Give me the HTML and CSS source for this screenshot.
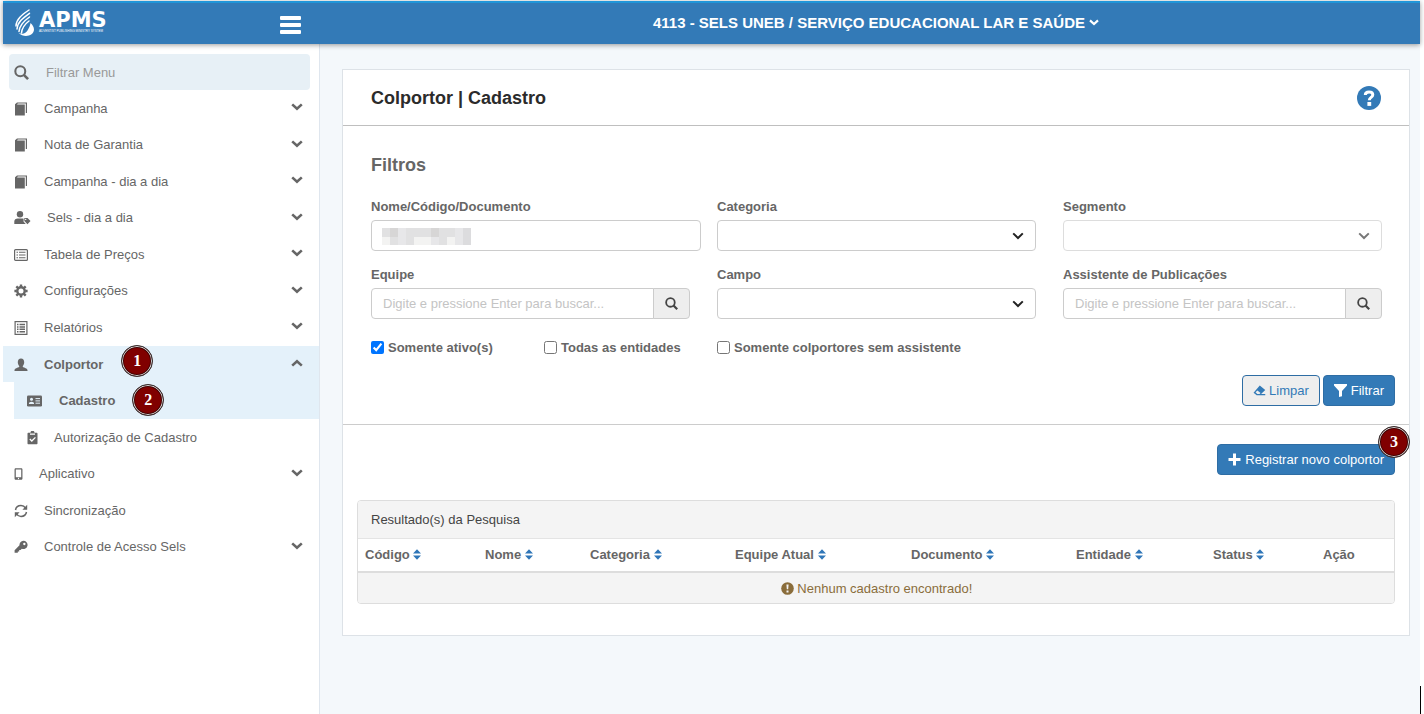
FILE: index.html
```html
<!DOCTYPE html>
<html lang="pt-BR">
<head>
<meta charset="utf-8">
<title>Colportor | Cadastro</title>
<link rel="stylesheet" href="styles.css">
</head>
<body>
<svg class="sprite" aria-hidden="true">
  <symbol id="chevron" viewBox="0 0 12 8"><path d="M1.2 1.4 6 5.8l4.8-4.4" fill="none" stroke="currentColor" stroke-width="2.6"/></symbol>
  <symbol id="caret" viewBox="0 0 12 8"><path d="M1.2 1.4 6 6l4.8-4.6" fill="none" stroke="currentColor" stroke-width="2"/></symbol>
  <symbol id="search" viewBox="0 0 16 16"><circle cx="6.7" cy="6.700" r="5.300" fill="none" stroke="currentColor" stroke-width="2.200"/><path d="m10.500 10.500 4.500 4.500" stroke="currentColor" stroke-width="2.800"/></symbol>
  <symbol id="book" viewBox="0 0 14 14"><path d="M1 2.200 3 .5h10V11h-1.200V1.600H3.800L3 2.500h7.800V13.500H1z" fill="currentColor"/></symbol>
  <symbol id="user-tag" viewBox="0 0 17 14"><circle cx="6" cy="3.3" r="3.2" fill="currentColor"/><path d="M.3 13v-2.400c0-2 1.500-3.200 3.400-3.200h4.500c.6 0 1 .1 1.400.3v3l2.200 2.300z" fill="currentColor"/><path d="M10.300 7h3.200l3 3-3 3.200-3.200-3.200z" fill="currentColor"/><circle cx="11.700" cy="8.400" r=".7" fill="#fff"/></symbol>
  <symbol id="list" viewBox="0 0 14 12"><rect x=".6" y=".6" width="12.800" height="10.800" rx="1" fill="none" stroke="currentColor" stroke-width="1.200"/><path d="M2.500 3.300h1.500M2.500 6H4M2.500 8.700H4M5 3.300h6.500M5 6h6.500M5 8.700h6.500" stroke="currentColor" stroke-width="1.100"/></symbol>
  <symbol id="gear" viewBox="0 0 14 14"><circle cx="7" cy="7" r="3.700" fill="none" stroke="currentColor" stroke-width="2.400"/><path d="M7 .4v2.400M7 11.200v2.400M.4 7h2.400M11.200 7h2.400M2.300 2.300 4 4M10 10l1.700 1.700M2.300 11.700 4 10M10 4l1.700-1.700" stroke="currentColor" stroke-width="2.400"/></symbol>
  <symbol id="report" viewBox="0 0 14 14"><rect x="1.100" y=".6" width="11.800" height="12.800" fill="none" stroke="currentColor" stroke-width="1.200"/><path d="M3 3.500h1.500M3 5.900h1.500M3 8.300h1.500M3 10.700h1.500M5.500 3.500H11M5.500 5.900H11M5.500 8.300H11M5.500 10.700H11" stroke="currentColor" stroke-width="1.500"/></symbol>
  <symbol id="user" viewBox="0 0 14 14"><path d="M7 .5c2.100 0 3.200 1.500 3.200 3.700 0 1.500-.6 2.900-1.400 3.700v1.200c1.300.8 4.700 1.300 4.700 3.200V13H.5v-.7c0-1.900 3.400-2.400 4.700-3.200V7.900C4.400 7.100 3.800 5.700 3.800 4.200 3.800 2 4.900.5 7 .5z" fill="currentColor"/></symbol>
  <symbol id="id-card" viewBox="0 0 15 12"><rect y=".5" width="15" height="11" rx="1.300" fill="currentColor"/><circle cx="4.500" cy="4.300" r="1.500" fill="#e4f1fa"/><path d="M1.900 9c0-1.600 1-2.300 2.600-2.300s2.600.7 2.600 2.300z" fill="#e4f1fa"/><path d="M8.500 3.600H13M8.500 5.900H13M8.500 8.200H13" stroke="#e4f1fa"/></symbol>
  <symbol id="clipboard" viewBox="0 0 11 14"><path d="M1.500 1.700h2a2 2 0 0 1 4 0h2c.6 0 1 .4 1 1v9.600c0 .6-.4 1-1 1h-8c-.6 0-1-.4-1-1V2.700c0-.6.400-1 1-1z" fill="currentColor"/><path d="M3 3.200h5M2.800 8l2 2 3.600-3.600" fill="none" stroke="#fff" stroke-width="1.300"/></symbol>
  <symbol id="phone" viewBox="0 0 10 14"><path d="M2 .5h6c.8 0 1.400.6 1.400 1.400v10.200c0 .8-.6 1.400-1.400 1.400H2c-.8 0-1.400-.6-1.400-1.400V1.900C.6 1.100 1.200.5 2 .5zM2 2v8.500h6V2z" fill="currentColor" fill-rule="evenodd"/><circle cx="5" cy="12" r=".7" fill="#fff"/></symbol>
  <symbol id="sync" viewBox="0 0 14 14"><path d="M1.500 6C2 3.300 4.300 1.600 7 1.600c2 0 3.500.9 4.600 2.500M12.500 8c-.5 2.700-2.800 4.400-5.500 4.400-2 0-3.500-.9-4.600-2.500" fill="none" stroke="currentColor" stroke-width="1.500"/><path d="M13.200.8v5H8.400zM.8 13.200v-5h4.800z" fill="currentColor"/></symbol>
  <symbol id="key" viewBox="0 0 14 14"><path d="M9.300.7a4.200 4.200 0 1 1-1.500 8.100L6.600 10H5.200v1.400H3.800v1.400H.6v-2.600l4.900-4.900A4.200 4.200 0 0 1 9.300.7zm1 2.100a1.200 1.200 0 1 0 .1 2.400 1.200 1.200 0 0 0-.1-2.400z" fill="currentColor" fill-rule="evenodd"/></symbol>
  <symbol id="eraser" viewBox="0 0 14 12"><path d="M7.300.6 13.200 5.500 8.700 9.800h4.500v1.400H4L.6 8.300z" fill="currentColor"/><path d="M2.700 8 4.800 6l3.300 2.800-1 1H4.600z" fill="#eee"/></symbol>
  <symbol id="funnel" viewBox="0 0 13 13"><path d="M0 0h13v1.500L8 7v5.200L5 13V7L0 1.500z" fill="currentColor"/></symbol>
  <symbol id="plus" viewBox="0 0 13 13"><path d="M6.500.5v12M.5 6.500h12" stroke="currentColor" stroke-width="3"/></symbol>
  <symbol id="sort" viewBox="0 0 8 11"><path d="M4 .2 8 4.600H0zM4 10.800 0 6.400h8z" fill="currentColor"/></symbol>
  <symbol id="alert" viewBox="0 0 13 13"><circle cx="6.500" cy="6.500" r="6.300" fill="currentColor"/><path d="M5.400 2.500h2.200l-.4 4.800H5.800zM5.500 8.500h2v1.900h-2z" fill="#f4f4f4"/></symbol>
  <symbol id="help" viewBox="0 0 24 24"><circle cx="12" cy="12" r="12" fill="currentColor"/><path d="M8.300 9C8.300 6.700 9.900 6 12 6s3.800.9 3.800 2.800c0 2.700-3.500 2.500-3.500 5.400" fill="none" stroke="#fff" stroke-width="3"/><path d="M10.400 16h3.800v3.900h-3.800z" fill="#fff"/></symbol>
</svg>
<div class="app">
  <header class="topbar">
    <div class="brand">
      <a class="logo" href="#">
        <svg class="flame" viewBox="0 0 20 28" aria-hidden="true">
          <g fill="none" stroke="#fff" stroke-linecap="round" stroke-width="1.500"><path d="M14 1C6.500 6 1 10.500 1 17"/><path d="M14.500 4.300C8 9 2.500 13 2 20"/><path d="M14.500 8C9.500 11.500 4.500 16 4 22.500"/><path d="M14 12c-4 3-7 6.500-7.500 12"/></g>
          <path d="M15.500 14c4.200 3.500 4.700 8.500 1 11.200-3.700 2.600-9 2.300-13-1.200 4.500 1.500 7.300.5 9-2.500 1.300-2.300 2.700-4.500 3-7.500z" fill="#fff"/>
        </svg>
        <span class="wordmark"><span class="name">APMS</span><span class="tagline">ADVENTIST PUBLISHING MINISTRY SYSTEM</span></span>
      </a>
      <button class="burger" type="button" aria-label="Menu"><span></span><span></span><span></span></button>
    </div>
    <button class="entity" type="button">4113 - SELS UNEB / SERVIÇO EDUCACIONAL LAR E SAÚDE <svg class="entity-caret"><use href="#chevron"/></svg></button>
  </header>
  <div class="body">
    <nav class="sidebar">
      <label class="menu-search"><svg class="ico"><use href="#search"/></svg><input type="text" placeholder="Filtrar Menu" aria-label="Filtrar Menu"></label>
      <ul class="menu">
        <li><a href="#"><svg class="ico"><use href="#book"/></svg>Campanha<svg class="arrow"><use href="#chevron"/></svg></a></li>
        <li><a href="#"><svg class="ico"><use href="#book"/></svg>Nota de Garantia<svg class="arrow"><use href="#chevron"/></svg></a></li>
        <li><a href="#"><svg class="ico"><use href="#book"/></svg>Campanha - dia a dia<svg class="arrow"><use href="#chevron"/></svg></a></li>
        <li><a href="#"><svg class="ico ico-wide"><use href="#user-tag"/></svg>Sels - dia a dia<svg class="arrow"><use href="#chevron"/></svg></a></li>
        <li><a href="#"><svg class="ico"><use href="#list"/></svg>Tabela de Preços<svg class="arrow"><use href="#chevron"/></svg></a></li>
        <li><a href="#"><svg class="ico"><use href="#gear"/></svg>Configurações<svg class="arrow"><use href="#chevron"/></svg></a></li>
        <li><a href="#"><svg class="ico"><use href="#report"/></svg>Relatórios<svg class="arrow"><use href="#chevron"/></svg></a></li>
        <li class="open">
          <a class="active" href="#"><svg class="ico"><use href="#user"/></svg><span class="marked">Colportor<span class="step">1</span></span><svg class="arrow up"><use href="#chevron"/></svg></a>
          <a class="sub active" href="#"><svg class="ico ico-card"><use href="#id-card"/></svg><span class="marked">Cadastro<span class="step">2</span></span></a>
          <a class="sub" href="#"><svg class="ico ico-slim"><use href="#clipboard"/></svg>Autorização de Cadastro</a>
        </li>
        <li><a href="#"><svg class="ico ico-phone"><use href="#phone"/></svg>Aplicativo<svg class="arrow"><use href="#chevron"/></svg></a></li>
        <li><a href="#"><svg class="ico"><use href="#sync"/></svg>Sincronização</a></li>
        <li><a href="#"><svg class="ico"><use href="#key"/></svg>Controle de Acesso Sels<svg class="arrow"><use href="#chevron"/></svg></a></li>
      </ul>
    </nav>
    <main class="content">
      <section class="panel">
        <div class="panel-head"><h1>Colportor | Cadastro</h1><button class="help" type="button" aria-label="Ajuda"><svg><use href="#help"/></svg></button></div>
        <form class="filters">
          <h2>Filtros</h2>
          <div class="grid">
            <div class="field field-wide"><label for="nome">Nome/Código/Documento</label>
              <div class="masked"><input id="nome" class="control" type="text">
                <svg class="mosaic" viewBox="0 0 11 2" preserveAspectRatio="none" shape-rendering="crispEdges" aria-hidden="true">
                  <path fill="#e1e1e2" d="M0 0h11v2H0z"/><path fill="#d7d6d6" d="M1 0h1v1H1zM6 0h1v1H6z"/><path fill="#e7e7e9" d="M2 0h1v2H2zM9 0h1v2H9zM6 1h1v1H6z"/><path fill="#f3f3f2" d="M0 1h1v1H0zM4 1h2v1H4zM8 1h1v1H8z"/><path fill="#dcdcde" d="M10 0h1v2h-1z"/>
                </svg></div></div>
            <div class="field"><label for="categoria">Categoria</label><div class="picker"><select id="categoria" class="control"><option></option></select><svg><use href="#caret"/></svg></div></div>
            <div class="field"><label for="segmento">Segmento</label><div class="picker off"><select id="segmento" class="control" disabled><option></option></select><svg><use href="#caret"/></svg></div></div>
            <div class="field"><label for="equipe">Equipe</label><div class="group"><input id="equipe" class="control" type="text" placeholder="Digite e pressione Enter para buscar..."><button type="button" aria-label="Buscar equipe"><svg><use href="#search"/></svg></button></div></div>
            <div class="field"><label for="campo">Campo</label><div class="picker"><select id="campo" class="control"><option></option></select><svg><use href="#caret"/></svg></div></div>
            <div class="field"><label for="assistente">Assistente de Publicações</label><div class="group"><input id="assistente" class="control" type="text" placeholder="Digite e pressione Enter para buscar..."><button type="button" aria-label="Buscar assistente"><svg><use href="#search"/></svg></button></div></div>
            <label class="check"><input type="checkbox" checked>Somente ativo(s)</label>
            <label class="check"><input type="checkbox">Todas as entidades</label>
            <label class="check check-long"><input type="checkbox">Somente colportores sem assistente</label>
          </div>
          <div class="actions">
            <button class="btn btn-light" type="button"><svg><use href="#eraser"/></svg>Limpar</button>
            <button class="btn" type="button"><svg><use href="#funnel"/></svg>Filtrar</button>
          </div>
        </form>
        <div class="results">
          <div class="register"><button class="btn" type="button"><svg><use href="#plus"/></svg>Registrar novo colportor</button><span class="step step-corner">3</span></div>
          <div class="card">
            <div class="card-head">Resultado(s) da Pesquisa</div>
            <table>
              <colgroup><col class="c-codigo"><col class="c-nome"><col class="c-categoria"><col class="c-equipe"><col class="c-documento"><col class="c-entidade"><col class="c-status"><col class="c-acao"></colgroup>
              <thead><tr>
                <th>Código <svg><use href="#sort"/></svg></th><th>Nome <svg><use href="#sort"/></svg></th><th>Categoria <svg><use href="#sort"/></svg></th><th>Equipe Atual <svg><use href="#sort"/></svg></th><th>Documento <svg><use href="#sort"/></svg></th><th>Entidade <svg><use href="#sort"/></svg></th><th>Status <svg><use href="#sort"/></svg></th><th>Ação</th>
              </tr></thead>
              <tbody><tr><td colspan="8"><svg><use href="#alert"/></svg> Nenhum cadastro encontrado!</td></tr></tbody>
            </table>
          </div>
        </div>
      </section>
    </main>
  </div>
</div>
<span class="edge-mark"></span>
</body>
</html>
```
FILE: styles.css
```css
* { box-sizing: border-box; }
body {
  margin: 0;
  padding: 1px 4px 0 3px;
  background: #fff;
  color: #666;
  font: 13px/20px "Liberation Sans", Arial, sans-serif;
}
input, select, button { font: inherit; color: inherit; }
button { margin: 0; padding: 0; border: 0; background: none; }
a { color: inherit; text-decoration: none; }
svg { display: block; flex: none; }
.sprite { position: absolute; width: 0; height: 0; }
.app { display: flex; flex-direction: column; min-height: calc(100vh - 1px); }

.topbar {
  display: flex;
  position: relative;
  z-index: 1;
  height: 43px;
  padding-bottom: 2px;
  border-top: 2px solid #2196d9;
  background: #337ab7;
  color: #fff;
  box-shadow: 0 1px 5px rgba(0, 0, 0, .4);
}
.brand { display: flex; flex: none; align-items: center; justify-content: space-between; width: 317px; padding: 0 19px 0 12px; }
.logo { display: flex; gap: 4px; align-items: center; }
.flame { width: 20px; height: 28px; }
.wordmark { display: flex; flex-direction: column; }
.name { font: bold 21px/16px "DejaVu Sans", sans-serif; }
.tagline { font-size: 3px; line-height: 6px; white-space: nowrap; }
.burger { display: flex; flex-direction: column; gap: 3px; padding-top: 5px; }
.burger span { width: 21px; height: 4px; border-radius: 1px; background: #fff; }
.entity { display: flex; flex: 1; gap: 4px; align-items: center; justify-content: center; padding-left: 12px; font-size: 15px; font-weight: bold; }
.entity-caret { width: 10px; height: 7px; }

.body { display: flex; flex: 1; }
.sidebar { flex: none; width: 317px; padding-top: 10px; border-right: 1px solid #dfe6ee; }
.menu-search { display: flex; align-items: center; height: 36px; margin: 0 9px 0 6px; padding-left: 5px; border-radius: 4px; background: #e7f0f6; }
.menu-search .ico { width: 15px; height: 15px; margin-right: 17px; }
.menu-search input { flex: 1; min-width: 0; padding: 1px 0 0; border: 0; background: none; outline: 0; }
.menu-search input::placeholder { color: #999; }
.menu { display: grid; grid-auto-rows: 1fr; min-height: 475px; margin: 0; padding: 0; list-style: none; }
.menu li { display: grid; }
.menu .open { grid-row: span 3; grid-template-rows: repeat(3, 1fr); }
.menu a { display: flex; align-items: center; padding: 1px 16px 0 11px; }
.menu .sub { margin-left: 11px; padding-left: 13px; }
.menu .active { background: #e4f1fa; font-weight: bold; }
.ico { width: 14px; height: 14px; margin-right: 16px; }
.ico-wide { width: 17px; }
.ico-card { width: 15px; margin-right: 17px; }
.ico-slim { width: 11px; }
.ico-phone { width: 9px; }
.arrow { width: 12px; height: 8px; margin: 0 0 3px auto; }
.arrow.up { transform: rotate(180deg); }
.marked { position: relative; }
.step {
  position: absolute;
  top: 50%;
  left: calc(100% + 18px);
  width: 32px;
  height: 32px;
  margin-top: -20px;
  border: 1px solid #333;
  border-radius: 50%;
  background: #800000;
  box-shadow: inset 0 0 0 1px #ddd, inset 0 0 0 2px #400;
  color: #fff;
  font: bold 16px/30px "Liberation Serif", serif;
  text-align: center;
}
.sub .step { left: calc(100% + 17px); margin-top: -17px; }

.content { flex: 1; min-width: 0; padding: 25px 10px 20px 22px; background: #f4f8fb; }
.panel { border: 1px solid #dde2e7; background: #fff; }
.panel-head { display: flex; align-items: center; justify-content: space-between; height: 56px; padding: 0 28px; border-bottom: 1px solid #bfbfbf; }
h1, h2 { margin: 0; font-size: 18px; line-height: 24px; }
h1 { color: #2b2b2b; }
.help { color: #337ab7; }
.help svg { width: 24px; height: 24px; }
.filters { padding: 27px 0 18px 28px; border-bottom: 1px solid #ccc; }
.grid { display: grid; grid-template-columns: repeat(6, 1fr); row-gap: 14px; margin-top: 20px; }
.field { grid-column: span 2; padding-right: 27px; }
.field-wide { padding-right: 16px; }
.field label { display: block; height: 23px; font-weight: bold; }
.control { display: block; width: 100%; height: 31px; padding: 0 11px; border: 1px solid #ccc; border-radius: 4px; background: #fff; outline: 0; }
.control::placeholder { color: #c4c4c4; }
.masked, .picker { position: relative; }
.mosaic { position: absolute; top: 8px; left: 11px; width: 89px; height: 17px; }
.picker select { appearance: none; opacity: 1; }
.picker svg { position: absolute; top: 12px; right: 12px; width: 12px; height: 8px; color: #222; pointer-events: none; }
.picker.off svg { color: #777; }
.picker.off select { border-color: #ddd; }
.group { display: flex; }
.group .control { flex: 1; min-width: 0; border-radius: 4px 0 0 4px; }
.group button { display: flex; align-items: center; justify-content: center; width: 37px; margin-left: -1px; border: 1px solid #ccc; border-radius: 0 4px 4px 0; background: #eee; color: #444; }
.group svg { width: 13px; height: 13px; }
.check { display: flex; gap: 4px; align-items: center; margin-top: 5px; font-weight: bold; white-space: nowrap; }
.check input { width: 13px; height: 13px; margin: 0 0 2px; }
.check-long { grid-column: span 2; }
.actions { display: flex; gap: 3px; justify-content: flex-end; margin-top: 17px; padding-right: 14px; }
.btn { display: flex; gap: 4px; align-items: center; height: 31px; padding: 0 10px; border: 1px solid #2e6da4; border-radius: 4px; background: #337ab7; color: #fff; }
.btn svg { width: 13px; height: 13px; }
.btn-light { gap: 3px; background: #eee; color: #337ab7; }
.results { padding: 19px 14px 31px; }
.register { position: relative; width: fit-content; margin-left: auto; }
.step-corner { top: 0; left: auto; right: -15px; margin-top: -18px; }
.card { margin-top: 25px; overflow: hidden; border: 1px solid #ddd; border-radius: 4px; }
.card-head { padding: 9px 13px 8px; border-bottom: 1px solid #e4e4e4; background: #f4f4f4; color: #444; }
table { width: 100%; border-collapse: collapse; table-layout: fixed; }
.c-codigo { width: 120px; }
.c-nome { width: 105px; }
.c-categoria { width: 145px; }
.c-equipe { width: 176px; }
.c-documento { width: 165px; }
.c-entidade { width: 137px; }
.c-status { width: 110px; }
.c-acao { width: 79px; }
th { padding: 6px 7px; border-bottom: 2px solid #ddd; text-align: left; white-space: nowrap; }
th svg, td svg { display: inline-block; vertical-align: -1px; }
th svg { width: 8px; height: 11px; color: #2f76b8; }
td { padding: 6px 8px 4px; background: #f4f4f4; color: #8a6d3b; text-align: center; }
td svg { width: 13px; height: 13px; vertical-align: -2px; }
.edge-mark { position: absolute; right: 3px; bottom: 0; width: 1px; height: 28px; background: #000; }
```
